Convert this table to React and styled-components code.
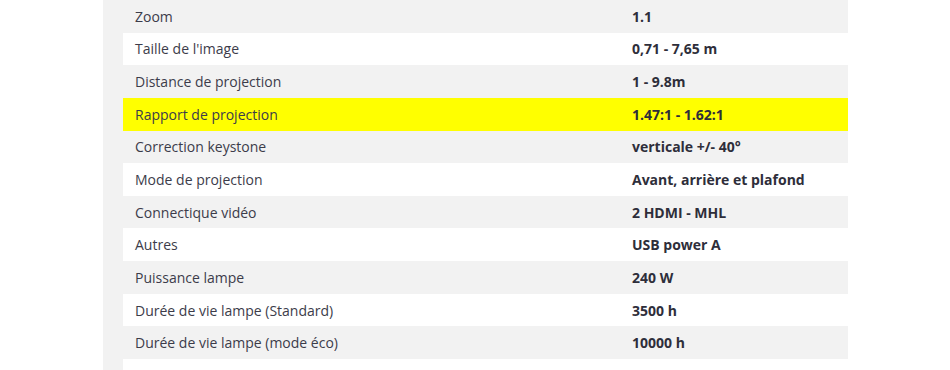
import React from "react";
import styled, { createGlobalStyle } from "styled-components";

const Global = createGlobalStyle`
  html, body { margin: 0; padding: 0; background: #ffffff; }
  body { font-family: "Open Sans", "Liberation Sans", sans-serif; overflow: hidden; }
`;

const Page = styled.div`
  display: flex;
  width: 950px;
  height: 370px;
  overflow: hidden;
  background: #ffffff;
`;

const Panel = styled.div`
  margin-left: 103px;
  width: 745px;
  padding-left: 20px;
  box-sizing: border-box;
  background: #f2f2f2;
  display: flex;
  flex-direction: column;
`;

const Row = styled.div`
  display: grid;
  grid-template-columns: 497px 1fr;
  height: 32.65px;
  align-items: center;
  background: ${(p) => (p.$highlight ? "#ffff00" : p.$even ? "#ffffff" : "#f2f2f2")};
  flex-shrink: 0;
`;

const Label = styled.div`
  padding-left: 12px;
  font-size: 14px;
  color: ${(p) => (p.$faded ? "#e2e2e6" : "#3c3c4a")};
  white-space: nowrap;
`;

const Value = styled.div`
  padding-left: 12px;
  font-size: 14px;
  font-weight: 700;
  color: ${(p) => (p.$faded ? "#e0e0e4" : "#2e2e3a")};
  white-space: nowrap;
`;

const rows = [
  ["Zoom", "1.1"],
  ["Taille de l'image", "0,71 - 7,65 m"],
  ["Distance de projection", "1 - 9.8m"],
  ["Rapport de projection", "1.47:1 - 1.62:1", true],
  ["Correction keystone", "verticale +/- 40°"],
  ["Mode de projection", "Avant, arrière et plafond"],
  ["Connectique vidéo", "2 HDMI - MHL"],
  ["Autres", "USB power A"],
  ["Puissance lampe", "240 W"],
  ["Durée de vie lampe (Standard)", "3500 h"],
  ["Durée de vie lampe (mode éco)", "10000 h"],
  ["Durée de vie lampe (mode SmartEco)", "15000 h", false, true],
];

export default function App() {
  return (
    <Page>
      <Global />
      <Panel>
        {rows.map(([label, value, hl, faded], i) => (
          <Row key={label} $even={i % 2 === 1} $highlight={hl}>
            <Label $faded={faded}>{label}</Label>
            <Value $faded={faded}>{value}</Value>
          </Row>
        ))}
      </Panel>
    </Page>
  );
}
